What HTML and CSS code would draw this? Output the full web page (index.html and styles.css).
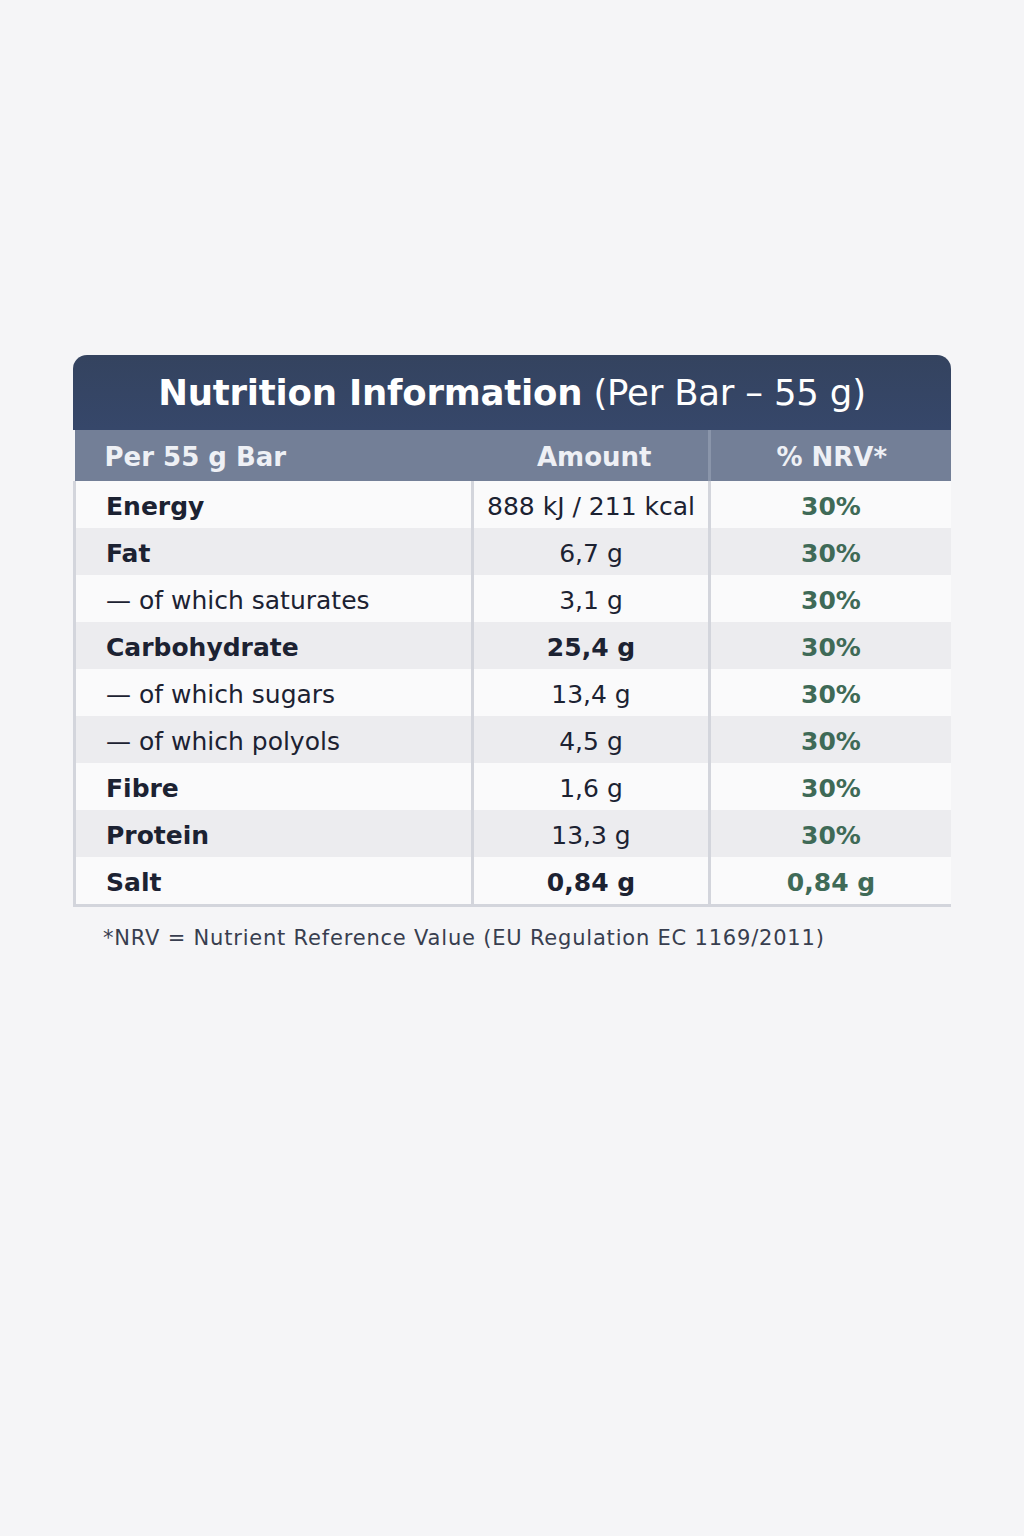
FILE: index.html
```html
<!DOCTYPE html>
<html lang="en">
<head>
<meta charset="utf-8">
<title>Nutrition Information</title>
<link rel="stylesheet" href="styles.css">
</head>
<body>
<main class="panel">
  <div class="card">
    <h1 class="title"><strong>Nutrition Information</strong> (Per Bar – 55 g)</h1>
    <table class="nutri">
      <colgroup>
        <col class="c1"><col class="c2"><col class="c3">
      </colgroup>
      <thead>
        <tr><th class="lbl">Per 55 g Bar</th><th class="amt">Amount</th><th class="nrv">% NRV*</th></tr>
      </thead>
      <tbody>
        <tr><td class="lbl b">Energy</td><td class="amt">888 kJ / 211 kcal</td><td class="nrv">30%</td></tr>
        <tr><td class="lbl b">Fat</td><td class="amt">6,7 g</td><td class="nrv">30%</td></tr>
        <tr><td class="lbl">— of which saturates</td><td class="amt">3,1 g</td><td class="nrv">30%</td></tr>
        <tr><td class="lbl b">Carbohydrate</td><td class="amt b">25,4 g</td><td class="nrv">30%</td></tr>
        <tr><td class="lbl">— of which sugars</td><td class="amt">13,4 g</td><td class="nrv">30%</td></tr>
        <tr><td class="lbl">— of which polyols</td><td class="amt">4,5 g</td><td class="nrv">30%</td></tr>
        <tr><td class="lbl b">Fibre</td><td class="amt">1,6 g</td><td class="nrv">30%</td></tr>
        <tr><td class="lbl b">Protein</td><td class="amt">13,3 g</td><td class="nrv">30%</td></tr>
        <tr><td class="lbl b">Salt</td><td class="amt b">0,84 g</td><td class="nrv">0,84 g</td></tr>
      </tbody>
    </table>
  </div>
  <p class="note">*NRV = Nutrient Reference Value (EU Regulation EC 1169/2011)</p>
</main>
</body>
</html>
```

FILE: styles.css
```css
html, body {
  margin: 0;
  padding: 0;
  background: #f5f5f7;
}
body {
  font-family: "DejaVu Sans", Inter, "Noto Sans", sans-serif;
  color: #1c2232;
  min-height: 1536px;
}
.panel {
  width: 878px;
  margin: 0 auto;
  padding-top: 355px;
}
.card {
  border-radius: 14px 14px 0 0;
  overflow: hidden;
}
.title {
  margin: 0;
  height: 75px;
  background: linear-gradient(180deg, #34435f 0%, #36476a 100%);
  color: #ffffff;
  font-size: 35.5px;
  font-weight: 400;
  line-height: 75px;
  text-align: center;
  letter-spacing: -0.2px;
}
.title strong {
  font-weight: 700;
}
.nutri {
  width: 100%;
  border-collapse: collapse;
  table-layout: fixed;
}
.c1 { width: 398px; }
.c2 { width: 237px; }
.c3 { width: 243px; }
.nutri thead th {
  background: #737f97;
  color: #eef0f5;
  font-size: 26px;
  font-weight: 700;
  height: 49px;
  padding: 2px 0 0;
}
.nutri thead th.amt {
  padding-left: 8px;
}
.nutri thead th.nrv {
  border-left: 3px solid #8a95aa;
}
.nutri th.lbl, .nutri td.lbl {
  text-align: left;
  padding-left: 30px;
}
.nutri .amt, .nutri .nrv {
  text-align: center;
}
.nutri tbody td {
  height: 44px;
  padding: 3px 0 0;
  font-size: 25px;
  font-weight: 400;
  border-left: 3px solid #d3d5dc;
}
.nutri tbody td.lbl {
  padding-left: 30px;
}
.nutri tbody td.nrv {
  border-right: 3px solid #d3d5dc;
  color: #3f6a57;
  font-weight: 700;
}
.nutri tbody tr:nth-child(odd) td {
  background: #fafafb;
}
.nutri tbody tr:nth-child(even) td {
  background: #ececef;
}
.nutri tbody tr:last-child td {
  border-bottom: 3px solid #d3d5dc;
}
.nutri td.b {
  font-weight: 700;
}
.note {
  margin: 19px 0 0 30px;
  font-size: 21px;
  letter-spacing: 0.8px;
  color: #383e4f;
}
```
